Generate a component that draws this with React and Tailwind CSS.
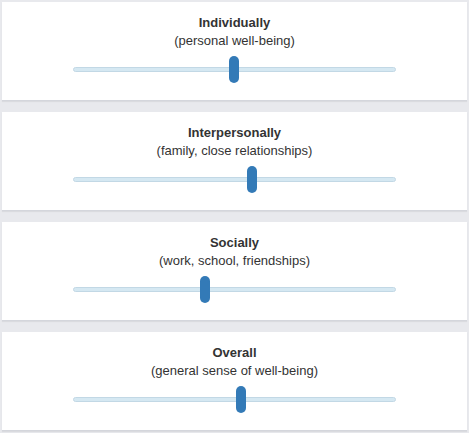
import React from "react";

const items = [
  { title: "Individually", sub: "(personal well-being)", pos: 161 },
  { title: "Interpersonally", sub: "(family, close relationships)", pos: 179 },
  { title: "Socially", sub: "(work, school, friendships)", pos: 132 },
  { title: "Overall", sub: "(general sense of well-being)", pos: 168 },
];

function Card({ title, sub, pos }) {
  return (
    <div className="bg-white h-[99px] border-b border-[#d4d6dc] shadow-[0_1px_1px_rgba(0,0,0,0.06)] flex flex-col items-center pt-[12px] text-[#333]">
      <div className="text-[13px] leading-[18px] font-bold">{title}</div>
      <div className="text-[13px] leading-[18px]">{sub}</div>
      <div className="relative w-[323px] h-[27px] mt-[6px] flex items-center">
        <div className="w-full h-[5px] rounded-[3px] bg-[#d5e8f2] border border-[#c2d8e5]" />
        <div
          className="absolute top-0 w-[10px] h-[27px] rounded-[5px] bg-[#337ab7]"
          style={{ left: pos - 5 }}
        />
      </div>
    </div>
  );
}

export default function App() {
  return (
    <div
      className="w-[469px] h-[433px] bg-[#e8e9ed] px-[2px] pt-[2px] flex flex-col gap-[11px]"
      style={{ fontFamily: '"Liberation Sans", Arial, sans-serif' }}
    >
      {items.map((it) => (
        <Card key={it.title} {...it} />
      ))}
    </div>
  );
}
